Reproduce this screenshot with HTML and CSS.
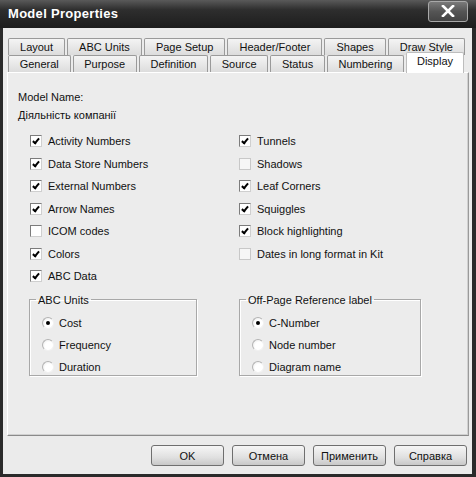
FILE: index.html
```html
<!DOCTYPE html>
<html lang="en">
<head>
    <meta charset="UTF-8">
    <title>Model Properties</title>
    <link rel="stylesheet" href="styles.css">
</head>
<body>
    <div class="window">
        <div class="titlebar">
            <span class="title">Model Properties</span>
            <span class="close-btn">
                <svg width="14" height="12" viewBox="0 0 14 12"><path d="M2 1 L12 11 M12 1 L2 11" stroke="#fff" stroke-width="2.6" stroke-linecap="square"/></svg>
            </span>
        </div>

        <div class="content">
            <div class="tab-row">
                <div class="tab">Layout</div>
                <div class="tab">ABC Units</div>
                <div class="tab">Page Setup</div>
                <div class="tab">Header/Footer</div>
                <div class="tab">Shapes</div>
                <div class="tab">Draw Style</div>
            </div>
            <div class="tab-row row-front">
                <div class="tab">General</div>
                <div class="tab">Purpose</div>
                <div class="tab">Definition</div>
                <div class="tab">Source</div>
                <div class="tab">Status</div>
                <div class="tab">Numbering</div>
                <div class="tab active">Display</div>
            </div>

            <div class="panel">
                <div class="model-name">
                    <div>Model Name:</div>
                    <div>Діяльність компанії</div>
                </div>

                <div class="options">
                    <div class="col">
                        <label class="check"><span class="box on"></span>Activity Numbers</label>
                        <label class="check"><span class="box on"></span>Data Store Numbers</label>
                        <label class="check"><span class="box on"></span>External Numbers</label>
                        <label class="check"><span class="box on"></span>Arrow Names</label>
                        <label class="check"><span class="box"></span>ICOM codes</label>
                        <label class="check"><span class="box on"></span>Colors</label>
                        <label class="check"><span class="box on"></span>ABC Data</label>
                    </div>
                    <div class="col">
                        <label class="check"><span class="box on"></span>Tunnels</label>
                        <label class="check"><span class="box off"></span>Shadows</label>
                        <label class="check"><span class="box on"></span>Leaf Corners</label>
                        <label class="check"><span class="box on"></span>Squiggles</label>
                        <label class="check"><span class="box on"></span>Block highlighting</label>
                        <label class="check"><span class="box off"></span>Dates in long format in Kit</label>
                    </div>
                </div>

                <div class="groups">
                    <fieldset class="group abc">
                        <legend>ABC Units</legend>
                        <label class="radio"><span class="dot on"></span>Cost</label>
                        <label class="radio"><span class="dot"></span>Frequency</label>
                        <label class="radio"><span class="dot"></span>Duration</label>
                    </fieldset>
                    <fieldset class="group offpage">
                        <legend>Off-Page Reference label</legend>
                        <label class="radio"><span class="dot on"></span>C-Number</label>
                        <label class="radio"><span class="dot"></span>Node number</label>
                        <label class="radio"><span class="dot"></span>Diagram name</label>
                    </fieldset>
                </div>
            </div>

            <div class="buttons">
                <button>OK</button>
                <button>Отмена</button>
                <button>Применить</button>
                <button>Справка</button>
            </div>
        </div>
    </div>
</body>
</html>
```

FILE: styles.css
```css
* {
    box-sizing: border-box;
}
body {
    margin: 0;
    background: #1c1c1c;
    font-family: 'Liberation Sans', Arial, sans-serif;
    font-size: 11px;
    color: #111;
}
.window {
    width: 476px;
    height: 477px;
    background: #ebebeb;
    border-left: 3px solid #2a2a2a;
    border-right: 4px solid #2a2a2a;
    border-bottom: 3px solid #2a2a2a;
    display: flex;
    flex-direction: column;
}
.titlebar {
    height: 28px;
    margin: 0 -4px 0 -3px;
    background: linear-gradient(#5a5a5a, #2e2e2e 35%, #1d1d1d);
    display: flex;
    align-items: center;
    justify-content: space-between;
    padding: 0 8px 2px 8px;
}
.title {
    color: #fff;
    font-weight: bold;
    font-size: 13px;
    letter-spacing: 0.3px;
}
.close-btn {
    width: 40px;
    height: 21px;
    margin-top: -4px;
    border: 1px solid #a8a8a8;
    border-radius: 3px;
    background: linear-gradient(#7a7a7a, #555 50%, #444);
    display: flex;
    align-items: center;
    justify-content: center;
}
.content {
    padding: 10px 3px 0 4px;
    flex: 1;
    display: flex;
    flex-direction: column;
}
.tab-row {
    display: flex;
    margin-left: 1px;
    height: 17px;
    gap: 2px;
}
.tab-row:first-child {
    margin-right: 4px;
}
.row-front {
    margin-right: 7px;
    position: relative;
    z-index: 1;
}
.tab {
    flex: 1 1 auto;
    text-align: center;
    line-height: 16px;
    padding: 0 6px;
    background: linear-gradient(#f4f4f4, #dcdcdc);
    border: 1px solid #9a9a9a;
    border-bottom: none;
    border-radius: 2px 2px 0 0;
    white-space: nowrap;
}
.tab.active {
    flex: 0 0 58px;
    margin-top: -3px;
    margin-right: -2px;
    height: 21px;
    line-height: 17px;
    background: #fff;
    border-color: #bdbdbd;
}
.panel {
    height: 364px;
    background: #ececec;
    border-top: 1px solid #fff;
    border-left: 1px solid #fff;
    border-right: 1px solid #9a9a9a;
    border-bottom: 1px solid #8a8a8a;
    box-shadow: inset -1px -1px 0 #d0d0d0;
    padding: 18px 0 0 10px;
}
.model-name div {
    height: 18px;
    line-height: 13px;
}
.options {
    display: flex;
    margin-top: 3px;
    padding-left: 12px;
}
.col {
    display: flex;
    flex-direction: column;
}
.col:first-child {
    width: 209px;
}
.check, .radio {
    display: flex;
    align-items: center;
    height: 22.5px;
}
.box {
    width: 12px;
    height: 12px;
    margin-right: 6px;
    background: #fff;
    border: 1px solid #7c7c7c;
    border-right-color: #cfcfcf;
    border-bottom-color: #cfcfcf;
    display: inline-block;
    position: relative;
}
.box.on::after {
    content: "";
    position: absolute;
    left: 3px;
    top: 1px;
    width: 2px;
    height: 5px;
    border-right: 2px solid #000;
    border-bottom: 2px solid #000;
    transform: rotate(40deg);
}
.box.off {
    background: #f6f6f6;
    border-color: #c8c8c8;
}
.groups {
    display: flex;
    margin-top: 6px;
    padding-left: 11px;
    gap: 42px;
}
.group {
    margin: 0;
    height: 82px;
    border: 1px solid #a8a8a8;
    box-shadow: 1px 1px 0 #fff, inset 1px 1px 0 #fff;
    padding: 0 0 0 12px;
}
.group legend {
    padding: 0 2px;
    margin-left: -6px;
    line-height: 12px;
}
.abc {
    width: 168px;
}
.offpage {
    width: 182px;
}
.radio {
    height: 22.3px;
}
.radio:first-of-type {
    margin-top: 6px;
}
.dot {
    width: 12px;
    height: 12px;
    margin-right: 5px;
    border-radius: 50%;
    background: radial-gradient(circle at 60% 60%, #fff 45%, #e4e4e4);
    border: 1px solid #b4b4b4;
    border-right-color: #f2f2f2;
    border-bottom-color: #f2f2f2;
    position: relative;
}
.dot.on::after {
    content: "";
    position: absolute;
    left: 3px;
    top: 3px;
    width: 4px;
    height: 4px;
    border-radius: 50%;
    background: #000;
}
.buttons {
    display: flex;
    justify-content: flex-end;
    gap: 8px;
    margin-top: 9px;
    padding-right: 2px;
}
button {
    width: 73px;
    height: 21px;
    font-family: 'Liberation Sans', Arial, sans-serif;
    font-size: 11px;
    color: #111;
    border: 1px solid #6f6f6f;
    border-radius: 3px;
    background: linear-gradient(#f6f6f6, #e0e0e0 60%, #c8c8c8);
    padding: 0;
}
```
